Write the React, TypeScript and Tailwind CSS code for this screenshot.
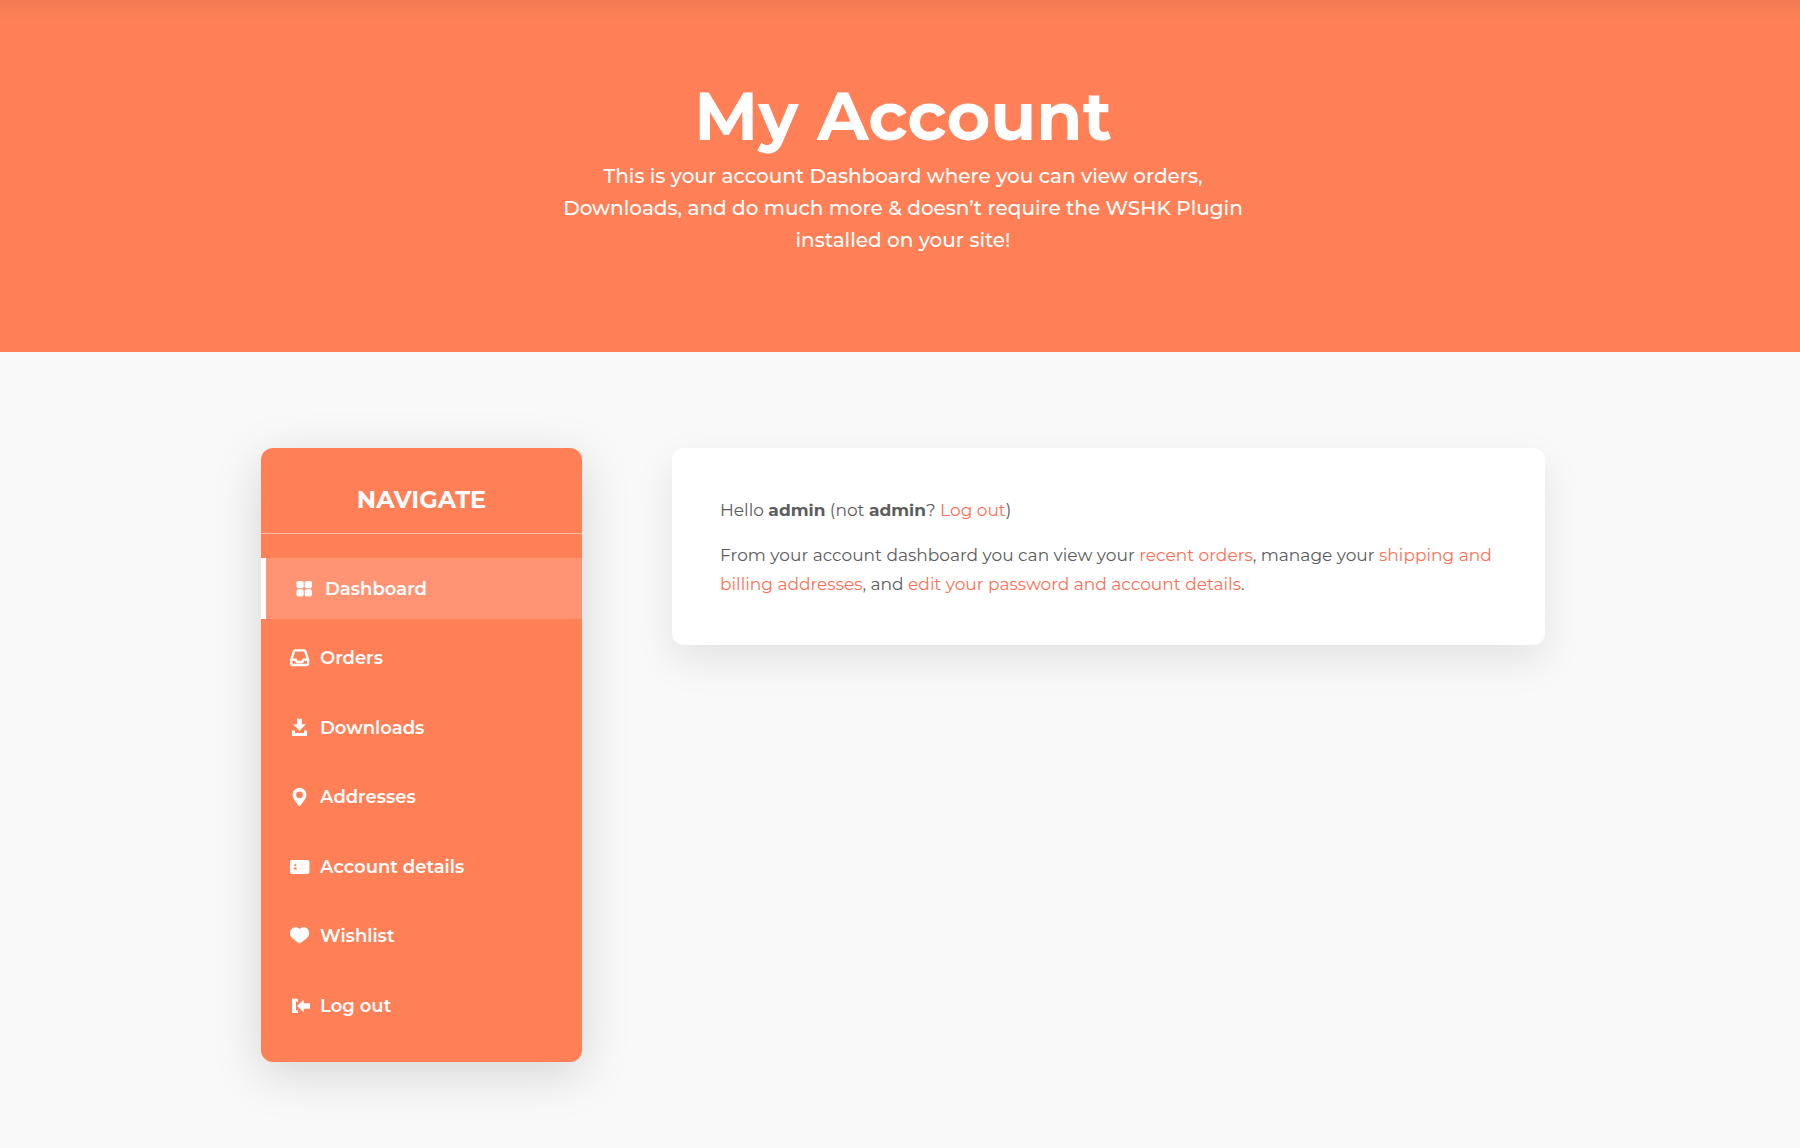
import type { ReactNode } from 'react';

interface NavItem {
  label: string;
  icon: ReactNode;
  active?: boolean;
}

const navItems: NavItem[] = [
  {
    label: 'Dashboard',
    active: true,
    icon: (
      <>
        <rect x="2.5" y="2" width="7.2" height="7.2" rx="1.8" />
        <rect x="10.7" y="2" width="7.2" height="7.2" rx="1.8" />
        <rect x="2.5" y="10.2" width="7.2" height="7.2" rx="1.8" />
        <rect x="10.7" y="10.2" width="7.2" height="7.2" rx="1.8" />
      </>
    ),
  },
  {
    label: 'Orders',
    icon: (
      <path
        d="M2.2 12L5 3.2Q5.3 2.4 6.3 2.4H15Q16 2.4 16.3 3.2L19.1 12V15.8Q19.1 17 18 17H3.3Q2.2 17 2.2 15.8zM2.2 11.6H6.8L8 14H13.3L14.5 11.6H19.1"
        fill="none"
        stroke="currentColor"
        strokeWidth="2.4"
        strokeLinejoin="round"
      />
    ),
  },
  {
    label: 'Downloads',
    icon: <path d="M8.1.8h4.8v5.4h4l-6.4 6.6-6.4-6.6h4zM3 12.6h3V15h9v-2.4h3V18H3z" />,
  },
  {
    label: 'Addresses',
    icon: (
      <path
        fillRule="evenodd"
        d="M10.5.8a6.9 6.9 0 0 0-6.9 6.9c0 4.6 4.6 8.3 6.3 11.3.3.6.9.6 1.2 0 1.7-3 6.3-6.7 6.3-11.3A6.9 6.9 0 0 0 10.5.8zm0 3.6a3.4 3.4 0 1 1 0 6.8 3.4 3.4 0 0 1 0-6.8z"
      />
    ),
  },
  {
    label: 'Account details',
    icon: (
      <>
        <rect x="1" y="3" width="19.4" height="14" rx="1.8" />
        <g fill="#ff8057">
          <circle cx="6.2" cy="7.9" r="1.2" opacity=".8" />
          <path d="M4.4 12.6c0-3.2 3.6-3.2 3.6 0z" />
          <path d="M10.5 7.4h6v.8h-6zM10.5 11.2h6v.8h-6z" opacity=".25" />
        </g>
      </>
    ),
  },
  {
    label: 'Wishlist',
    icon: (
      <path d="M10.6 3C8.8.7 5.2.6 3.1 2.5.6 4.8.3 8.5 2.3 11.1c1.9 2.3 5 4.4 8.3 6.5 3.3-2.1 6.4-4.2 8.3-6.5 2-2.6 1.7-6.3-.8-8.6C16 .6 12.4.7 10.6 3z" />
    ),
  },
  {
    label: 'Log out',
    icon: <path d="M3 2.8h5.9v3H7v8.4h1.9v2.9H3zM8.1 10l6.6-6.2v3.4H21v5.6h-6.3v3.4z" />,
  },
];

function Icon({ children }: { children: ReactNode }) {
  return (
    <svg
      viewBox="0 0 21 20"
      className="w-[21px] h-5 shrink-0"
      fill="currentColor"
      aria-hidden="true"
    >
      {children}
    </svg>
  );
}

function TextLink({ children }: { children: ReactNode }) {
  return (
    <a href="#" className="text-[#fb7054] hover:underline">
      {children}
    </a>
  );
}

function Hero() {
  return (
    <header className="bg-[#ff8057] bg-[linear-gradient(to_bottom,#f17952,#f87d55_8px,#ff8057_22px)] pt-20 pb-24 pl-1.5 text-white text-center">
      <h1 className="text-[67px] leading-[72px] font-bold pb-2">My Account</h1>
      <p className="max-w-[700px] mx-auto text-xl leading-8 font-medium">
        This is your account Dashboard where you can view orders, Downloads, and do much
        more &amp; doesn’t require the WSHK Plugin installed on your site!
      </p>
    </header>
  );
}

function Sidebar() {
  return (
    <nav
      aria-label="Account"
      className="w-1/4 min-h-[614px] shrink-0 flex flex-col bg-[#ff8057] rounded-xl text-white shadow-[0_12px_50px_rgba(0,0,0,0.15)]"
    >
      <h2 className="pt-8 pb-[13px] mb-6 text-2xl leading-10 font-bold text-center border-b border-white/50">
        NAVIGATE
      </h2>
      <ul className="flex-1 flex flex-col justify-between pb-[26px]">
        {navItems.map((item) => (
          <li key={item.label}>
            <a
              href="#"
              aria-current={item.active ? 'page' : undefined}
              className={`h-[61px] pl-7 flex items-center gap-2.5 text-lg font-semibold ${
                item.active ? 'bg-[#ff9474] border-l-[5px] border-white' : ''
              }`}
            >
              <Icon>{item.icon}</Icon>
              {item.label}
            </a>
          </li>
        ))}
      </ul>
    </nav>
  );
}

export default function App() {
  return (
    <div className="min-h-screen bg-[#f9f9f9] font-['Montserrat','Inter',sans-serif]">
      <Hero />
      <main className="pl-1.5 py-24">
        <div className="max-w-[1284px] mx-auto flex items-start gap-[90px]">
          <Sidebar />
          <section className="flex-1 bg-white rounded-xl px-12 pt-12 pb-[46px] space-y-4 text-[17px] leading-[29px] text-[#5c5c5c] shadow-[0_16px_40px_rgba(0,0,0,0.09)]">
            <p>
              Hello <strong className="font-bold">admin</strong> (not{' '}
              <strong className="font-bold">admin</strong>? <TextLink>Log out</TextLink>)
            </p>
            <p>
              From your account dashboard you can view your <TextLink>recent orders</TextLink>,
              manage your <TextLink>shipping and billing addresses</TextLink>, and{' '}
              <TextLink>edit your password and account details</TextLink>.
            </p>
          </section>
        </div>
      </main>
    </div>
  );
}
